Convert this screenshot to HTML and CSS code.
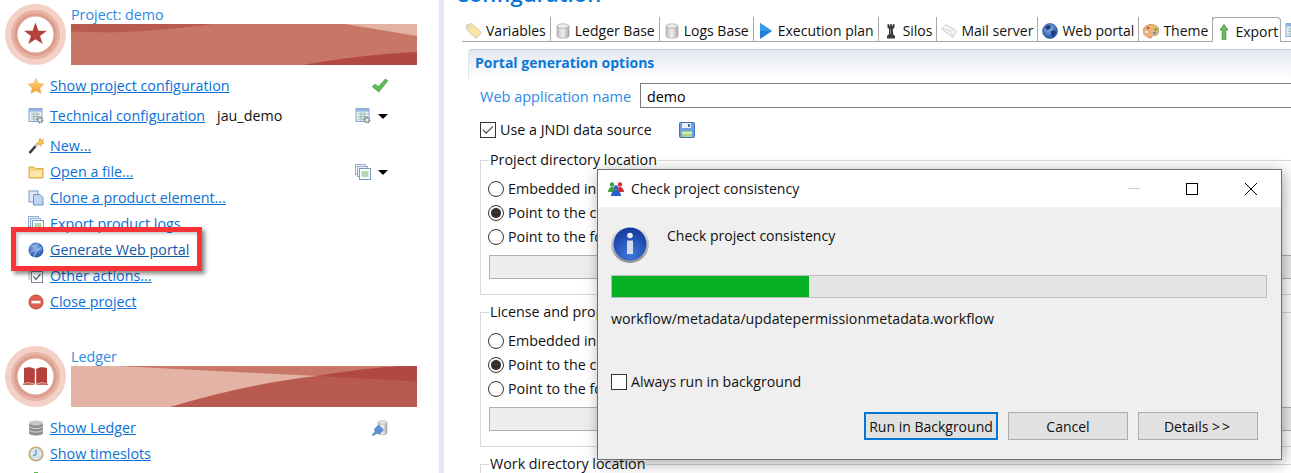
FILE: index.html
```html
<!DOCTYPE html>
<html lang="en">
<head>
    <meta charset="utf-8">
    <title>Check project consistency</title>
    <meta name="viewport" content="width=device-width, initial-scale=1">
    <link rel="stylesheet" href="styles.css">
</head>
<body>

<svg class="sprite" aria-hidden="true">
    <defs>
        <linearGradient id="gold" x1="0" y1="0" x2="0" y2="1"><stop offset="0" stop-color="#fde08a"/><stop offset="1" stop-color="#f39a2a"/></linearGradient>
        <linearGradient id="steel" x1="0" y1="0" x2="1" y2="0"><stop offset="0" stop-color="#bdbdbd"/><stop offset=".5" stop-color="#f0f0ec"/><stop offset="1" stop-color="#a8a8a8"/></linearGradient>
        <radialGradient id="orb" cx=".45" cy=".35" r=".75"><stop offset="0" stop-color="#8fb2e6"/><stop offset=".6" stop-color="#3f6fc0"/><stop offset="1" stop-color="#1f4390"/></radialGradient>
        <radialGradient id="infoblue" cx=".5" cy=".8" r=".8"><stop offset="0" stop-color="#3f7ae0"/><stop offset="1" stop-color="#14379a"/></radialGradient>
        <linearGradient id="inforing" x1="0" y1="0" x2="0" y2="1"><stop offset="0" stop-color="#f4f4f4"/><stop offset="1" stop-color="#8f8f8f"/></linearGradient>
    </defs>
    <symbol id="i-star" viewBox="0 0 16 16"><polygon points="8,.5 10.3,5.6 15.8,6.2 11.7,9.9 12.9,15.3 8,12.5 3.1,15.3 4.3,9.9 .2,6.2 5.7,5.6" fill="url(#gold)" stroke="#e8a33c" stroke-width=".6"/></symbol>
    <symbol id="i-config" viewBox="0 0 16 16"><rect x="1" y=".5" width="13" height="13" fill="#e4edf8" stroke="#86a6d0"/><rect x="1" y=".5" width="13" height="3" fill="#93b4de"/><path d="M3 6h9M3 8.5h9M3 11h9M6 4v9M9 4v9" stroke="#8fb59c" stroke-width=".8"/><circle cx="12" cy="12" r="2.6" fill="#c9c9c9" stroke="#777" stroke-width="1.6" stroke-dasharray="1.2 .8"/><circle cx="12" cy="12" r="1" fill="#fff"/></symbol>
    <symbol id="i-check" viewBox="0 0 16 16"><path d="M.3 8.600l3-2.400 3 2.600L13.400 1l2.400 1.800L6.800 14z" fill="#5cc04e" stroke="#3b8f3a" stroke-width=".7"/></symbol>
    <symbol id="i-wand" viewBox="0 0 16 16"><path d="M1.500 15L9.500 6" stroke="#3a3a3a" stroke-width="2.600"/><path d="M7.500 8.400L9.500 6" stroke="#cfcfcf" stroke-width="2.600"/><polygon points="12,0 12.9,2.6 15.6,1.4 14.4,4 16,5.6 13.6,5.8 12.6,8.4 11.2,6 8.6,5.6 10.6,3.8" fill="#f6c544" stroke="#e08a20" stroke-width=".5"/></symbol>
    <symbol id="i-folder" viewBox="0 0 16 16"><path d="M1 3h5l1.500 1.500H15V14H1z" fill="#f7d47e" stroke="#d9a84a"/><path d="M2 7h12v6H2z" fill="#fbe6a8"/></symbol>
    <symbol id="i-copy" viewBox="0 0 16 16"><rect x="1" y="1" width="9" height="11" fill="#dfe8f5" stroke="#7d9cc4"/><path d="M5.500 4.500H12L15 7.500V15H5.500z" fill="#bcd7f2" stroke="#6f93c0"/></symbol>
    <symbol id="i-logs" viewBox="0 0 16 16"><rect x=".5" y=".5" width="10" height="10" fill="#eef3fa" stroke="#93aed2"/><rect x="2.500" y="2.500" width="10" height="10" fill="#eef3fa" stroke="#93aed2"/><rect x="4.500" y="4.500" width="11" height="11" fill="#fff" stroke="#7d9cc4"/><path d="M6.500 8h7M6.500 10h7M6.500 12h7" stroke="#66b06a"/></symbol>
    <symbol id="i-globe" viewBox="0 0 16 16"><circle cx="8" cy="8" r="7.500" fill="url(#orb)"/><path d="M3 4c3 1 5 0 7-2.500M2 11c3-3 7-4 12-4M6 15c1-4 3-7 7-10" stroke="#a9c3ea" stroke-width="1" fill="none"/></symbol>
    <symbol id="i-earth" viewBox="0 0 16 16"><circle cx="8" cy="8" r="7.500" fill="url(#orb)" stroke="#25508f" stroke-width=".6"/><path d="M3 4l3-2 3 1-1 3-3 1zM9 8l4-1 1 3-3 4-2-2z" fill="#1c3e7c"/></symbol>
    <symbol id="i-tasks" viewBox="0 0 16 16"><rect x="1" y="0" width="11" height="11" fill="#eef1f5" stroke="#b4bccb"/><rect x="3.500" y="3.500" width="11" height="11" fill="#fff" stroke="#7f8a9c"/><path d="M5.500 8.500l2.500 3 4.500-5.500" stroke="#566073" stroke-width="1.200" fill="none"/></symbol>
    <symbol id="i-close" viewBox="0 0 16 16"><circle cx="8" cy="8" r="7" fill="#dd5f50" stroke="#bd4234"/><rect x="3.500" y="6.800" width="9" height="2.600" fill="#fff"/></symbol>
    <symbol id="i-db" viewBox="0 0 16 16"><path d="M1 3v10c0 1.500 3 2.500 7 2.500s7-1 7-2.500V3z" fill="#8e8e8e"/><ellipse cx="8" cy="3" rx="7" ry="2.500" fill="#c8c8c8"/><path d="M1 6.500c1 1.500 3.500 2 7 2s6-.5 7-2M1 10c1 1.500 3.500 2 7 2s6-.5 7-2" stroke="#dadada" fill="none"/></symbol>
    <symbol id="i-clock" viewBox="0 0 16 16"><circle cx="8" cy="8" r="6.800" fill="#d5e4f4" stroke="#c7a768" stroke-width="1.600"/><path d="M8 4v4.500L5 10" stroke="#5d6a80" fill="none"/></symbol>
    <symbol id="i-plug" viewBox="0 0 16 16"><path d="M6 2v11c0 1 2 1.800 4.500 1.800S15 14 15 13V2z" fill="url(#steel)" stroke="#999" stroke-width=".5"/><ellipse cx="10.500" cy="2.500" rx="4.500" ry="1.800" fill="#e6e6e6" stroke="#999" stroke-width=".5"/><path d="M0 15l3-3-.5-3 4-4 5 5-4 4-3-.5-3 2z" fill="#5f8fd6" stroke="#3f6cb0" stroke-width=".5"/></symbol>
    <symbol id="i-plus" viewBox="0 0 16 16"><path d="M6 0h4v6h6v4h-6v6H6v-6H0V6h6z" fill="#62bb52"/></symbol>
    <symbol id="i-tag" viewBox="0 0 16 16"><path d="M.5 2l5.500-1.500 9.500 9-5.500 6-9.500-9z" fill="#f8e6a0" stroke="#c9c9c9"/><circle cx="3.800" cy="4" r="1.100" fill="#fff" stroke="#bbb" stroke-width=".5"/></symbol>
    <symbol id="i-cyl" viewBox="0 0 16 16"><path d="M2 3v10c0 1.300 2.700 2.200 6 2.200s6-.9 6-2.200V3z" fill="url(#steel)" stroke="#9a9a9a" stroke-width=".6"/><ellipse cx="8" cy="3" rx="6" ry="2.200" fill="#ececec" stroke="#9a9a9a" stroke-width=".6"/></symbol>
    <symbol id="i-play" viewBox="0 0 16 16"><polygon points="2,0 14,8 2,16" fill="#1b80d8"/><polygon points="2,0 14,8 2,8" fill="#3a9ae8"/></symbol>
    <symbol id="i-rook" viewBox="0 0 16 16"><path d="M4.500 1h1.500v1.500h1.200V1h1.600v1.500H10V1h1.500v3.500L10 6v5l2 2v2.500H4V13l2-2V6L4.500 4.500z" fill="#3c3c3c"/><path d="M7 6h1v5H7z" fill="#8a8a8a"/></symbol>
    <symbol id="i-mail" viewBox="0 0 16 16"><path d="M.5 6L5 1.500 15.500 8 12 14.500z" fill="#f3f3f3" stroke="#cfcfcf"/><path d="M.5 6L9.500 7.500 12 14.500" fill="none" stroke="#dcdcdc"/></symbol>
    <symbol id="i-palette" viewBox="0 0 16 16"><path d="M8 1.500c4.500 0 8 2.500 8 6s-2.500 5.500-5 5c-1.500-.3-2 .5-2 1.500s-1.500 1.500-3 .8C2.500 13.500 0 11 0 8c0-4 4-6.500 8-6.500z" fill="#e9b27a" stroke="#b47a45" stroke-width=".6"/><circle cx="5" cy="5" r="1.300" fill="#d9534a"/><circle cx="9" cy="4" r="1.300" fill="#f2cf3c"/><circle cx="12.800" cy="6.500" r="1.300" fill="#4bb05a"/><circle cx="11.500" cy="10" r="1.300" fill="#3f8fd0"/><circle cx="3.500" cy="9" r="1.300" fill="#f6ead6"/></symbol>
    <symbol id="i-up" viewBox="0 0 16 16"><path d="M8 .5L12 6H9.800v9.500H6.200V6H4z" fill="#6fbd5c" stroke="#2f7d31" stroke-width=".7"/></symbol>
    <symbol id="i-save" viewBox="0 0 16 16"><rect x=".5" y=".5" width="15" height="15" rx="1" fill="#6f9fdc" stroke="#3d70b6"/><rect x="3" y="1" width="9" height="5" fill="#eaf1fb"/><rect x="9" y="2" width="2" height="3" fill="#3d70b6"/><rect x="3" y="9" width="10" height="6" fill="#a9d48a"/><path d="M3 11h10" stroke="#fff"/></symbol>
    <symbol id="i-people" viewBox="0 0 18 16"><circle cx="5" cy="3.500" r="2.200" fill="#3aa03e"/><path d="M1 11c0-3 2-5 4-5s4 2 4 5z" fill="#3aa03e"/><circle cx="13" cy="3.500" r="2.200" fill="#c8343a"/><path d="M9 11c0-3 2-5 4-5s4 2 4 5z" fill="#c8343a"/><circle cx="9" cy="6.500" r="2.200" fill="#2f5fc8"/><path d="M4 15c0-3.500 2.500-6 5-6s5 2.500 5 6z" fill="#2f5fc8"/></symbol>
    <symbol id="b-rings" viewBox="0 0 61 61"><circle cx="30.500" cy="30.500" r="30.500" fill="#f3d1c6"/><circle cx="30.500" cy="30.500" r="24.500" fill="#e6b3a4"/><circle cx="30.500" cy="30.500" r="21.500" fill="#dc9f8e"/><circle cx="30.500" cy="30.500" r="18" fill="#fff"/></symbol>
</svg>

<aside class="sidebar">
    <section class="group">
        <header class="group-head">
            <svg class="badge" viewBox="0 0 61 61"><use href="#b-rings"/><polygon points="30.500,18.500 33.400,26.800 42,26.800 35,32 37.700,40 30.500,35.300 23.300,40 26,32 19,26.800 27.600,26.800" fill="#b5403c"/></svg>
            <div class="group-title">
                <h2>Project: demo</h2>
                <svg class="banner" viewBox="0 0 346 41">
                    <rect width="346" height="41" fill="#c87766"/>
                    <path d="M0 0H142C100 6 50 9 29 8.300 15 8 5 8 0 7.500Z" fill="#b85a4d"/>
                    <path d="M274 0H346V12Z" fill="#e3b2a3"/>
                    <path d="M232 41C260 36 300 30 346 28V41Z" fill="#b24844"/>
                </svg>
            </div>
        </header>
        <ul class="actions">
            <li class="action spaced"><svg class="icon"><use href="#i-star"/></svg><a href="#">Show project configuration</a><span class="tools tools-end"><svg class="icon"><use href="#i-check"/></svg></span></li>
            <li class="action spaced"><svg class="icon"><use href="#i-config"/></svg><a href="#">Technical configuration</a><span class="value">jau_demo</span><span class="tools"><svg class="icon"><use href="#i-config"/></svg><i class="caret"></i></span></li>
            <li class="action"><svg class="icon"><use href="#i-wand"/></svg><a href="#">New...</a></li>
            <li class="action"><svg class="icon"><use href="#i-folder"/></svg><a href="#">Open a file...</a><span class="tools"><svg class="icon"><use href="#i-logs"/></svg><i class="caret"></i></span></li>
            <li class="action"><svg class="icon"><use href="#i-copy"/></svg><a href="#">Clone a product element...</a></li>
            <li class="action"><svg class="icon"><use href="#i-logs"/></svg><a href="#">Export product logs</a></li>
            <li class="action"><svg class="icon"><use href="#i-globe"/></svg><a href="#" class="dark">Generate Web portal</a></li>
            <li class="action"><svg class="icon"><use href="#i-tasks"/></svg><a href="#">Other actions...</a></li>
            <li class="action"><svg class="icon"><use href="#i-close"/></svg><a href="#">Close project</a></li>
        </ul>
        <div class="highlight"></div>
    </section>

    <section class="group group-next">
        <header class="group-head">
            <svg class="badge" viewBox="0 0 61 61"><use href="#b-rings"/><path d="M19 22c4-1.500 8-1 10.800 1v15c-3-1.700-7-2-10.800-1zM42 22c-4-1.500-8-1-10.800 1v15c3-1.700 7-2 10.800-1z" fill="#b5403c"/><path d="M18 37.500c4-1 9-1 12.500 1.500 3.500-2.500 8.500-2.500 12.500-1.500v1.500H18z" fill="#c9665c"/></svg>
            <div class="group-title">
                <h2>Ledger</h2>
                <svg class="banner" viewBox="0 0 346 41">
                    <rect width="346" height="41" fill="#e3b3a5"/>
                    <path d="M47 0L246 10 346 15.600V0Z" fill="#c87766"/>
                    <path d="M99 41C150 26 200 15 246 10 290 3 320 0 346 0V41Z" fill="#b85a4d"/>
                    <path d="M246 10C290 3 320 0 346 0V15.600Z" fill="#b24844"/>
                </svg>
            </div>
        </header>
        <ul class="actions">
            <li class="action"><svg class="icon"><use href="#i-db"/></svg><a href="#">Show Ledger</a><span class="tools tools-end"><svg class="icon"><use href="#i-plug"/></svg></span></li>
            <li class="action"><svg class="icon"><use href="#i-clock"/></svg><a href="#">Show timeslots</a></li>
            <li class="action"><svg class="icon"><use href="#i-plus"/></svg></li>
        </ul>
    </section>
</aside>

<main class="editor">
    <h1>Configuration</h1>

    <ul class="tabs">
        <li class="tab"><svg class="icon"><use href="#i-tag"/></svg>Variables</li>
        <li class="tab"><svg class="icon"><use href="#i-cyl"/></svg>Ledger Base</li>
        <li class="tab"><svg class="icon"><use href="#i-cyl"/></svg>Logs Base</li>
        <li class="tab"><svg class="icon"><use href="#i-play"/></svg>Execution plan</li>
        <li class="tab"><svg class="icon"><use href="#i-rook"/></svg>Silos</li>
        <li class="tab"><svg class="icon"><use href="#i-mail"/></svg>Mail server</li>
        <li class="tab"><svg class="icon"><use href="#i-earth"/></svg>Web portal</li>
        <li class="tab"><svg class="icon"><use href="#i-palette"/></svg>Theme</li>
        <li class="tab tab-active"><svg class="icon"><use href="#i-up"/></svg>Export</li>
        <li class="tab"><svg class="icon"><use href="#i-config"/></svg></li>
    </ul>

    <section class="options">
        <h3>Portal generation options</h3>
        <form class="options-form">
            <div class="field">
                <label for="webapp">Web application name</label>
                <input type="text" id="webapp" value="demo">
            </div>
            <div class="jndi">
                <label class="choice"><input type="checkbox" class="check" checked>Use a JNDI data source</label>
                <svg class="icon"><use href="#i-save"/></svg>
            </div>

            <fieldset>
                <legend>Project directory location</legend>
                <label class="choice"><input type="radio" class="radio" name="project">Embedded in the web application</label>
                <label class="choice"><input type="radio" class="radio" name="project" checked>Point to the current directory</label>
                <label class="choice"><input type="radio" class="radio" name="project">Point to the following directory</label>
                <input type="text" class="path" disabled>
            </fieldset>

            <fieldset>
                <legend>License and properties location</legend>
                <label class="choice"><input type="radio" class="radio" name="license">Embedded in the web application</label>
                <label class="choice"><input type="radio" class="radio" name="license" checked>Point to the current directory</label>
                <label class="choice"><input type="radio" class="radio" name="license">Point to the following directory</label>
                <input type="text" class="path" disabled>
            </fieldset>

            <fieldset>
                <legend>Work directory location</legend>
            </fieldset>
        </form>
    </section>
</main>

<div class="dialog">
    <div class="dialog-title">
        <svg class="dialog-icon"><use href="#i-people"/></svg>
        <span>Check project consistency</span>
        <div class="window-buttons">
            <i class="win-min"></i>
            <i class="win-max"></i>
            <svg class="win-close" viewBox="0 0 12 12"><path d="M0 0L12 12M12 0L0 12" stroke="#000" fill="none"/></svg>
        </div>
    </div>
    <div class="dialog-body">
        <div class="dialog-message">
            <svg class="info" viewBox="0 0 38 38">
                <circle cx="19" cy="19" r="19" fill="url(#inforing)"/>
                <circle cx="19" cy="19" r="16.500" fill="url(#infoblue)"/>
                <circle cx="19" cy="10.500" r="2.800" fill="#e9eef8"/>
                <path d="M16 15.500h6V29h-6z" fill="#d8dee9"/>
            </svg>
            <span>Check project consistency</span>
        </div>
        <div class="progress"><div class="progress-fill"></div></div>
        <div class="task">workflow/metadata/updatepermissionmetadata.workflow</div>
        <label class="choice always"><input type="checkbox" class="check">Always run in background</label>
        <div class="buttons">
            <button type="button" class="primary">Run in Background</button>
            <button type="button">Cancel</button>
            <button type="button">Details <span class="arrows">&gt;&gt;</span></button>
        </div>
    </div>
</div>

</body>
</html>
```

FILE: styles.css
```css
html,
body {
    height: 473px;
}

body {
    font: normal 14px/22px "Open Sans", sans-serif;
    color: #111;
    margin: 0;
    padding: 0;
    display: flex;
    overflow: hidden;
    background: #fff;
}

.sprite {
    position: absolute;
    width: 0;
    height: 0;
}

.icon {
    display: block;
    flex: none;
    width: 16px;
    height: 16px;
}

/* left panel */

.sidebar {
    position: relative;
    flex: none;
    width: 434px;
    border-right: 5px solid #e1e7f6;
    padding: 4px 0 0 5px;
}

.group-next {
    margin-top: 31px;
}

.group-head {
    display: flex;
    gap: 5px;
}

.badge {
    flex: none;
    width: 61px;
    height: 61px;
}

.group-title h2 {
    font-size: 14.3px;
    font-weight: normal;
    line-height: 19px;
    color: #2b8ae4;
    margin: 0;
    padding-top: 1px;
}

.banner {
    display: block;
    width: 346px;
    height: 41px;
}

.actions {
    list-style: none;
    margin: 8px 0 0 0;
    padding: 0 49px 0 23px;
    font-size: 14.3px;
}

.action {
    display: flex;
    align-items: center;
    gap: 6px;
    height: 26px;
}

.action.spaced {
    margin-bottom: 4px;
}

.action a {
    color: #0a6fd6;
}

.action a.dark {
    color: #0f5aa8;
}

.value {
    margin-left: 6px;
}

.tools {
    display: flex;
    align-items: center;
    gap: 7px;
    margin-left: auto;
    width: 35px;
}

.tools-end {
    justify-content: flex-end;
    padding-right: 2px;
    box-sizing: border-box;
}

.caret {
    width: 0;
    height: 0;
    border: 5px solid transparent;
    border-top: 5px solid #000;
    border-bottom: 0;
}

.highlight {
    position: absolute;
    left: 11px;
    top: 227px;
    width: 181px;
    height: 34px;
    border: 5px solid #f93338;
    box-shadow: 3px 3px 4px rgba(0, 0, 0, .45), inset 2px 2px 3px rgba(0, 0, 0, .2);
}

/* editor */

.editor {
    flex: 1;
    min-width: 0;
    overflow: hidden;
    height: 473px;
}

.editor h1 {
    font-size: 22px;
    font-weight: 600;
    line-height: 22px;
    color: #0a78d8;
    height: 35px;
    margin: -18px 0 0 11px;
}

.tabs {
    list-style: none;
    display: flex;
    height: 24px;
    margin: 0 0 0 18px;
    padding: 0;
    border-bottom: 1px solid #a8a8a8;
}

.tab {
    display: flex;
    flex: none;
    align-items: center;
    gap: 4px;
    padding: 4px 4px 0 4px;
    border-right: 1px solid #a8a8a8;
}

.tab-active {
    height: 25px;
    box-sizing: border-box;
    background: #fff;
    border: 1px solid #a8a8a8;
    border-bottom: 0;
    border-radius: 4px 4px 0 0;
    gap: 3px;
    margin-left: -1px;
    padding: 4px 2px 0 3px;
}

.options {
    margin: 7px -20px 0 24px;
}

.options h3 {
    font-size: 14px;
    font-weight: bold;
    line-height: 26px;
    color: #0a78d8;
    height: 29px;
    margin: 0;
    padding-left: 6px;
    border-top: 1px solid #c3ccd8;
    border-left: 1px solid #dde3ec;
    border-radius: 4px 4px 0 0;
    background: linear-gradient(#e3e8f0, #fff);
}

.options-form {
    padding: 4px 0 0 12px;
    font-size: 14.3px;
}

.field {
    display: flex;
    align-items: center;
    height: 25px;
}

.field label {
    flex: none;
    width: 160px;
    font-size: 14.5px;
    padding-top: 2px;
    color: #2b8ae4;
}

.field input {
    flex: 1;
    font: inherit;
    height: 25px;
    box-sizing: border-box;
    border: 1px solid #7a7a7a;
    padding: 1px 6px 0 6px;
    outline: none;
}

.jndi {
    display: flex;
    align-items: center;
    gap: 27px;
    margin: 10px 0 8px 0;
}

.choice {
    display: flex;
    align-items: center;
    gap: 4px;
    height: 24px;
}

.check,
.radio {
    appearance: none;
    flex: none;
    width: 16px;
    height: 16px;
    box-sizing: border-box;
    margin: 0;
    background: #fff;
    border: 1px solid #333;
}

.check:checked::after {
    content: "";
    display: block;
    width: 9px;
    height: 4px;
    margin: 3px 0 0 2px;
    border-left: 1px solid #333;
    border-bottom: 1px solid #333;
    transform: rotate(-45deg);
}

.radio {
    border-radius: 50%;
}

.radio:checked {
    background: radial-gradient(circle, #333 0, #333 4.500px, #fff 5.500px);
}

fieldset {
    height: 132px;
    box-sizing: content-box;
    margin: 0 0 7px 0;
    padding: 7px 0 4px 8px;
    border: 1px solid #d8d8d8;
    min-width: 0;
}

legend {
    line-height: 20px;
    padding: 0 1px;
}

fieldset .choice {
    margin-left: -1px;
}

.path {
    display: block;
    width: 100%;
    height: 24px;
    box-sizing: border-box;
    margin-top: 6px;
    border: 1px solid #aab0bc;
    background: #eee;
}

/* dialog */

.dialog {
    position: absolute;
    left: 597px;
    top: 169px;
    width: 685px;
    height: 291px;
    box-sizing: border-box;
    display: flex;
    flex-direction: column;
    background: #efefef;
    border: 1px solid #707070;
    box-shadow: 2px 3px 14px rgba(0, 0, 0, .35);
}

.dialog-title {
    display: flex;
    flex: none;
    align-items: center;
    gap: 6px;
    height: 37px;
    padding-left: 9px;
    background: #fff;
}

.dialog-icon {
    width: 18px;
    height: 16px;
}

.window-buttons {
    display: flex;
    align-items: center;
    margin-left: auto;
    padding-right: 24px;
}

.win-min {
    width: 12px;
    border-top: 1px solid #ccc;
}

.win-max {
    width: 12px;
    height: 12px;
    box-sizing: border-box;
    border: 1px solid #000;
    margin: 0 47px 0 46px;
}

.win-close {
    width: 12px;
    height: 12px;
}

.dialog-body {
    padding: 18px 14px 0 13px;
}

.dialog-message {
    display: flex;
    gap: 18px;
    height: 38px;
}

.info {
    flex: none;
    width: 38px;
    height: 38px;
}

.progress {
    height: 23px;
    box-sizing: border-box;
    margin-top: 12px;
    border: 1px solid #bcbcbc;
    background: #e4e4e4;
}

.progress-fill {
    width: 197px;
    height: 100%;
    background: #06b025;
}

.task {
    font-size: 14.2px;
    margin-top: 10px;
}

.always {
    font-size: 14.15px;
    margin-top: 40px;
}

.buttons {
    display: flex;
    justify-content: flex-end;
    gap: 10px;
    margin: 18px 9px 0 0;
}

.buttons button {
    font: inherit;
    width: 120px;
    height: 28px;
    padding: 1px 0 0 0;
    color: #111;
    background: #e1e1e1;
    border: 1px solid #adadad;
}

.buttons button.primary {
    width: 134px;
    border: 2px solid #0078d7;
}

.arrows {
    letter-spacing: 2px;
}
```
